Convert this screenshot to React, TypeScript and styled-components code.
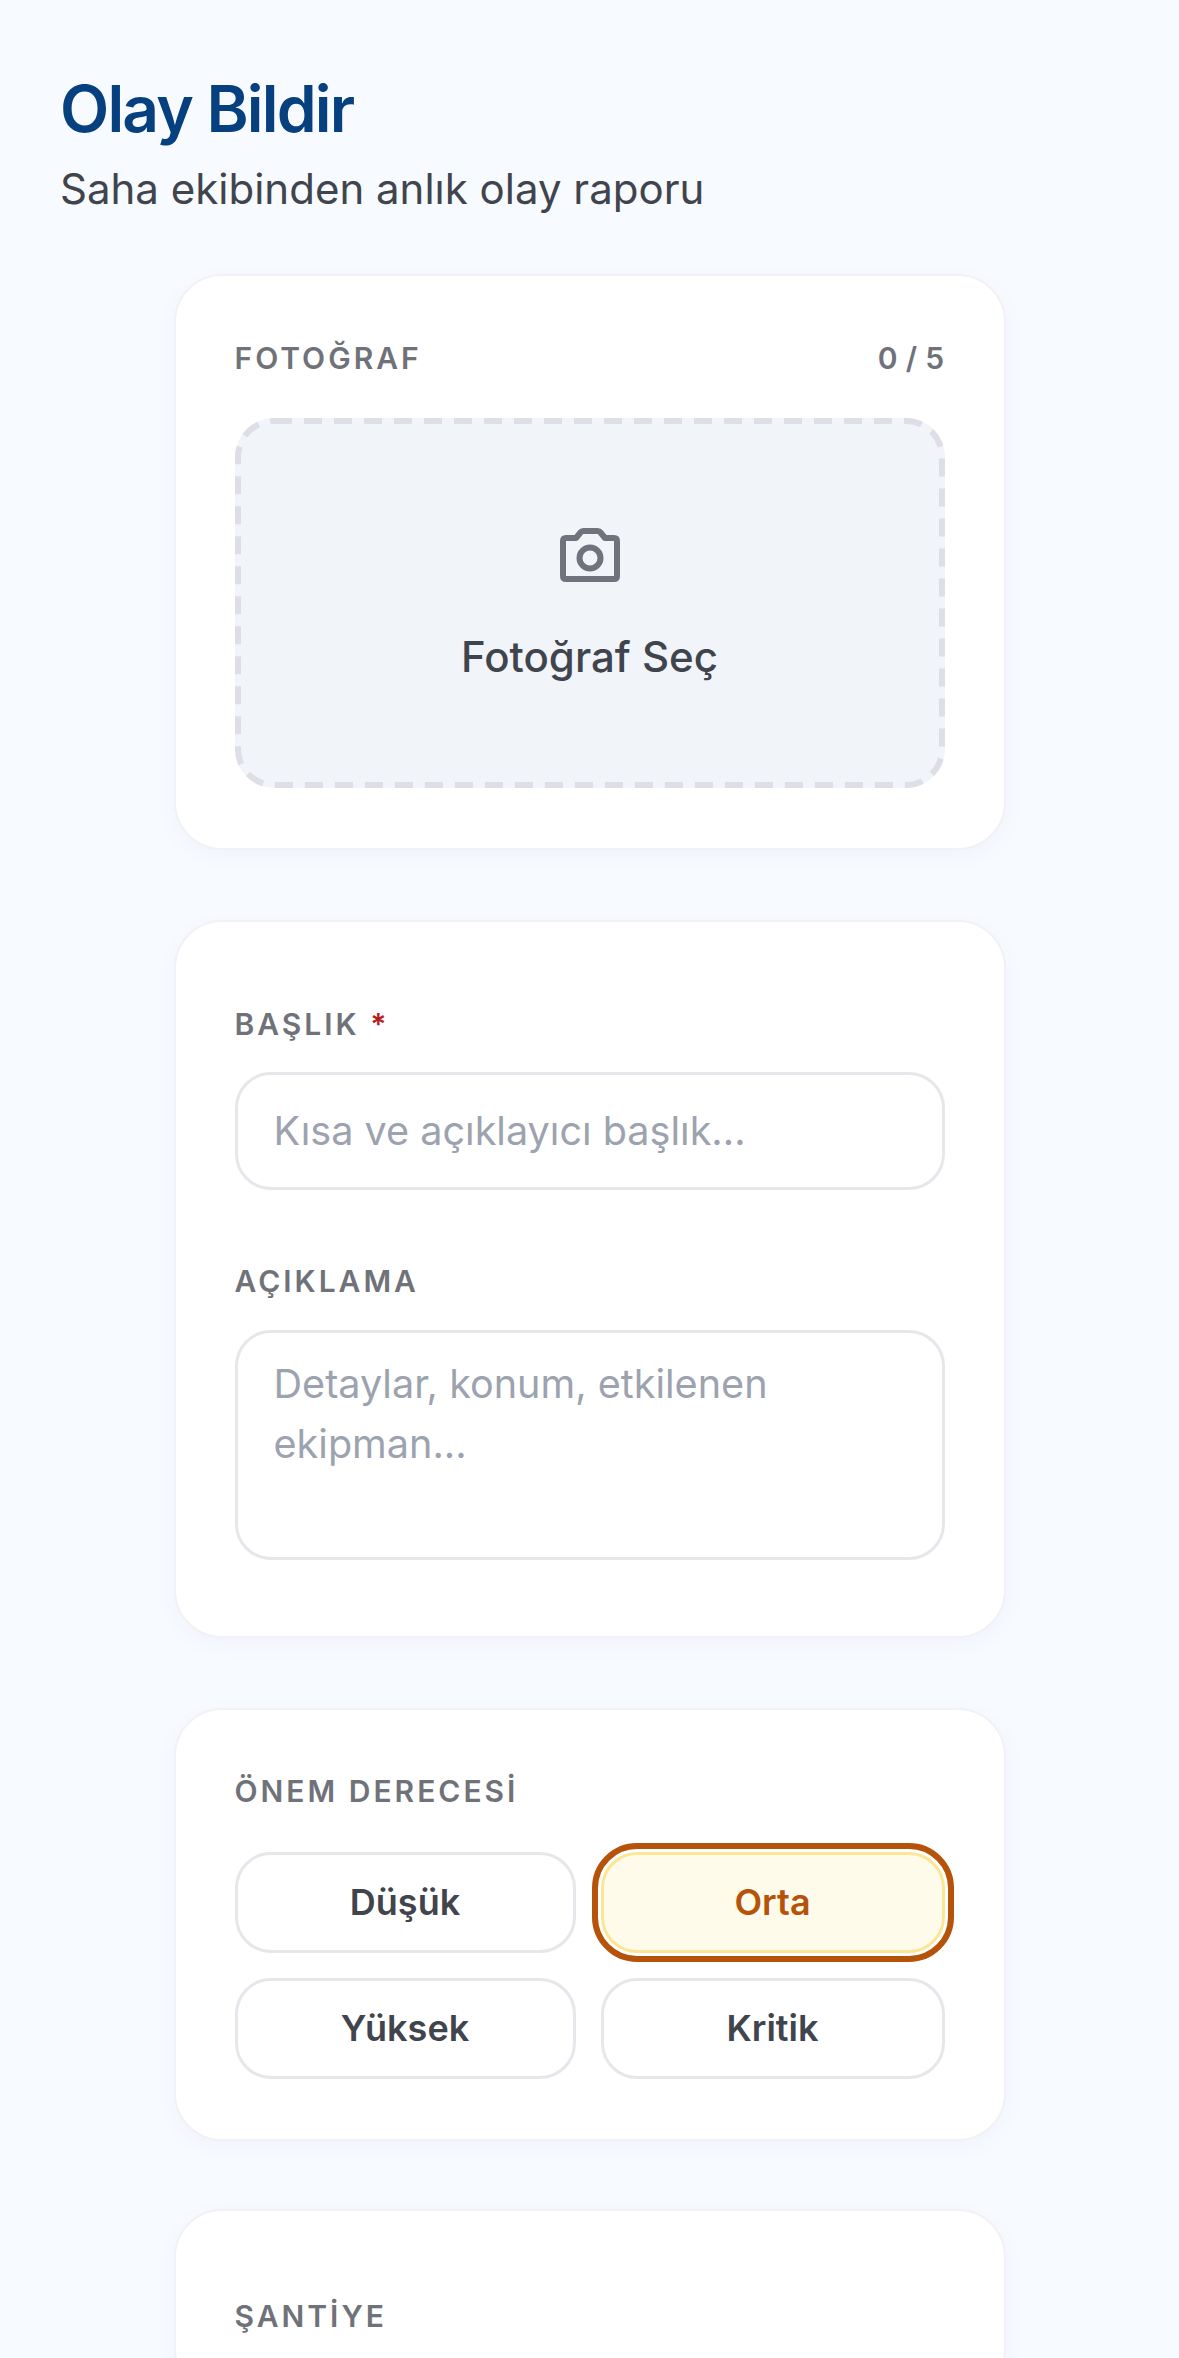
import React from "react";
import styled, { createGlobalStyle } from "styled-components";

const Global = createGlobalStyle`
  * { box-sizing: border-box; }
  html, body { margin: 0; padding: 0; background: #f7faff; }
  body { font-family: Inter, "Liberation Sans", sans-serif; }
  #root { height: 2358px; overflow: hidden; }
`;

const Page = styled.div`
  display: flex;
  flex-direction: column;
  padding-top: 71px;
`;
const Header = styled.header`
  padding: 0 60px;
  margin-bottom: 55px;
`;
const Title = styled.h1`
  margin: 0;
  font-size: 64px;
  line-height: 76px;
  font-weight: 600;
  letter-spacing: -1.8px;
  color: #06407f;
`;
const Subtitle = styled.p`
  margin: 12px 0 0;
  font-size: 42px;
  line-height: 60px;
  font-weight: 400;
  color: #3f444d;
`;
const Column = styled.main`
  width: 832px;
  margin: 0 auto;
  display: flex;
  flex-direction: column;
  gap: 70px;
`;
const Card = styled.section<{ $top: number; $bottom: number }>`
  background: #fff;
  border: 2px solid #f1f1f6;
  border-radius: 48px;
  padding: ${(p) => p.$top}px 59px ${(p) => p.$bottom}px;
  box-shadow: 0 6px 24px rgba(30, 40, 80, 0.03);
  &:last-child { margin-top: -2px; }
`;
const LabelRow = styled.div`
  display: flex;
  justify-content: space-between;
  align-items: center;
  margin-bottom: 40px;
`;
const Label = styled.label<{ $gap?: number }>`
  display: block;
  font-size: 30px;
  line-height: 40px;
  font-weight: 600;
  letter-spacing: 3px;
  color: #6f7279;
  margin-bottom: ${(p) => p.$gap ?? 0}px;
`;
const Counter = styled.span`
  font-size: 30px;
  line-height: 40px;
  font-weight: 600;
  letter-spacing: 0.3px;
  color: #6f7279;
`;
const Required = styled.span`
  color: #b91c1c;
`;
const Drop = styled.button`
  position: relative;
  width: 100%;
  height: 370px;
  display: flex;
  flex-direction: column;
  align-items: center;
  background: #f1f4f9;
  border: none;
  border-radius: 39px;
  padding: 110px 0 0;
  font-family: inherit;
`;
const DashedEdge = styled.svg`
  position: absolute;
  inset: 0;
  width: 100%;
  height: 100%;
  fill: none;
  stroke: #dddee6;
  stroke-width: 6;
  stroke-dasharray: 18 12;
`;
const CameraIcon = styled.svg`
  width: 60px;
  height: 54px;
  display: block;
  fill: none;
  stroke: #70737b;
  stroke-width: 6;
  stroke-linejoin: round;
`;
const DropText = styled.span`
  margin-top: 45px;
  font-size: 42px;
  line-height: 60px;
  font-weight: 500;
  color: #3f444d;
`;
const Field = styled.input`
  display: block;
  width: 100%;
  height: 118px;
  border: 3px solid #e5e7eb;
  border-radius: 36px;
  padding: 0 36px;
  background: #fff;
  font-family: inherit;
  font-size: 39.6px;
  color: #3f444d;
  outline: none;
  margin-bottom: 71px;
  &::placeholder { color: #9ca3af; opacity: 1; }
`;
const Area = styled.textarea`
  display: block;
  width: 100%;
  height: 230px;
  border: 3px solid #e5e7eb;
  border-radius: 36px;
  padding: 21px 36px;
  background: #fff;
  font-family: inherit;
  font-size: 39.6px;
  line-height: 60px;
  color: #3f444d;
  outline: none;
  resize: none;
  &::placeholder { color: #9ca3af; opacity: 1; }
`;
const Severity = styled.div`
  display: grid;
  grid-template-columns: 341px 344px;
  grid-auto-rows: 101px;
  gap: 25px;
`;
const Choice = styled.button<{ $on?: boolean }>`
  border: 3px solid ${(p) => (p.$on ? "#fbe697" : "#e5e7eb")};
  border-radius: 36px;
  background: ${(p) => (p.$on ? "#fffbeb" : "#fff")};
  color: ${(p) => (p.$on ? "#b45309" : "#3f444d")};
  font-family: inherit;
  font-size: 36px;
  font-weight: 600;
  padding: 0 0 2px;
  outline: ${(p) => (p.$on ? "6px solid #b45309" : "none")};
  outline-offset: 3px;
`;

export default function App() {
  return (
    <Page>
      <Global />
      <Header>
        <Title>Olay Bildir</Title>
        <Subtitle>Saha ekibinden anlık olay raporu</Subtitle>
      </Header>
      <Column>
        <Card $top={62} $bottom={60}>
          <LabelRow>
            <Label>FOTOĞRAF</Label>
            <Counter>0 / 5</Counter>
          </LabelRow>
          <Drop type="button">
            <DashedEdge viewBox="0 0 710 370" preserveAspectRatio="none">
              <rect x="3" y="3" width="704" height="364" rx="36" />
            </DashedEdge>
            <CameraIcon viewBox="0 0 60 54">
              <path d="M6 10H16L20.5 4.5Q21.5 3 23.5 3H37.5Q39.5 3 40.5 4.5L45 10H54Q57 10 57 13V48Q57 51 54 51H6Q3 51 3 48V13Q3 10 6 10Z" />
              <circle cx="30" cy="30" r="10.5" />
            </CameraIcon>
            <DropText>Fotoğraf Seç</DropText>
          </Drop>
        </Card>
        <Card $top={82} $bottom={76}>
          <Label $gap={28}>
            BAŞLIK <Required>*</Required>
          </Label>
          <Field placeholder="Kısa ve açıklayıcı başlık..." />
          <Label $gap={29}>AÇIKLAMA</Label>
          <Area placeholder="Detaylar, konum, etkilenen ekipman..." />
        </Card>
        <Card $top={61} $bottom={60}>
          <Label $gap={41}>ÖNEM DERECESİ</Label>
          <Severity>
            <Choice type="button">Düşük</Choice>
            <Choice type="button" $on>Orta</Choice>
            <Choice type="button">Yüksek</Choice>
            <Choice type="button">Kritik</Choice>
          </Severity>
        </Card>
        <Card $top={85} $bottom={60}>
          <Label>ŞANTİYE</Label>
        </Card>
      </Column>
    </Page>
  );
}
